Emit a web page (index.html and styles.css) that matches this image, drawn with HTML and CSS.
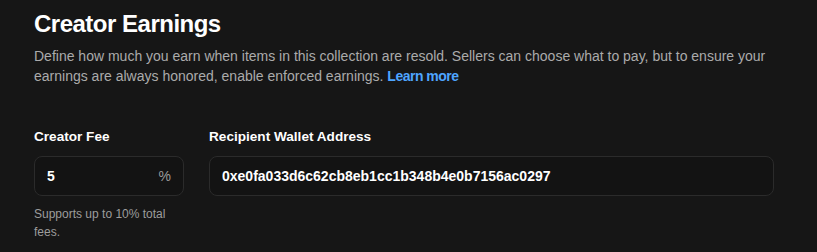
FILE: index.html
```html
<!DOCTYPE html>
<html lang="en">
<head>
    <meta charset="UTF-8">
    <meta name="viewport" content="width=device-width, initial-scale=1.0">
    <link rel="stylesheet" href="styles.css">
    <title>Creator Earnings</title>
</head>
<body>

<section class="earnings">
    <h2 class="earnings-title">Creator Earnings</h2>
    <p class="earnings-desc">
        Define how much you earn when items in this collection are resold. Sellers can choose what to pay, but to ensure your
        earnings are always honored, enable enforced earnings. <a href="#" class="learn-more">Learn more</a>
    </p>

    <div class="earnings-fields">
        <div class="field field-fee">
            <label class="field-label" for="fee">Creator Fee</label>
            <div class="field-box">
                <input class="field-input" type="text" id="fee" value="5">
                <span class="field-suffix">%</span>
            </div>
            <div class="field-hint">Supports up to 10% total fees.</div>
        </div>
        <div class="field field-wallet">
            <label class="field-label" for="wallet">Recipient Wallet Address</label>
            <div class="field-box">
                <input class="field-input" type="text" id="wallet" value="0xe0fa033d6c62cb8eb1cc1b348b4e0b7156ac0297">
            </div>
        </div>
    </div>
</section>

</body>
</html>
```

FILE: styles.css
```css
body {
    margin: 0;
    background-color: #161616;
    font-family: "Liberation Sans", Arial, sans-serif;
    color: #ffffff;
}

.earnings {
    width: 740px;
    padding: 8px 0 0 34px;
}

.earnings-title {
    margin: 0;
    font-size: 24px;
    font-weight: 700;
    line-height: 32px;
    letter-spacing: -0.5px;
}

.earnings-desc {
    margin: 6px 0 0;
    font-size: 14px;
    line-height: 20px;
    color: #ababab;
}

.learn-more {
    color: #4ea5ff;
    text-decoration: none;
    font-weight: 700;
    letter-spacing: -0.5px;
}

.earnings-fields {
    display: flex;
    gap: 25px;
    margin-top: 42px;
}

.field {
    display: flex;
    flex-direction: column;
}

.field-fee {
    width: 150px;
}

.field-wallet {
    flex: 1;
}

.field-label {
    font-size: 13.6px;
    font-weight: 700;
    line-height: 18px;
    margin-bottom: 10px;
}

.field-box {
    display: flex;
    align-items: center;
    height: 40px;
    box-sizing: border-box;
    border: 1px solid #2b2b2b;
    border-radius: 8px;
    background-color: #131313;
    padding: 0 12px;
}

.field-input {
    flex: 1;
    min-width: 0;
    background: transparent;
    border: none;
    outline: none;
    color: #ffffff;
    font-family: inherit;
    font-size: 14px;
    font-weight: 700;
    padding: 0;
}

.field-suffix {
    color: #9a9a9a;
    font-size: 14px;
}

.field-hint {
    margin-top: 9px;
    font-size: 12px;
    line-height: 18px;
    color: #9d9d9d;
}
```
